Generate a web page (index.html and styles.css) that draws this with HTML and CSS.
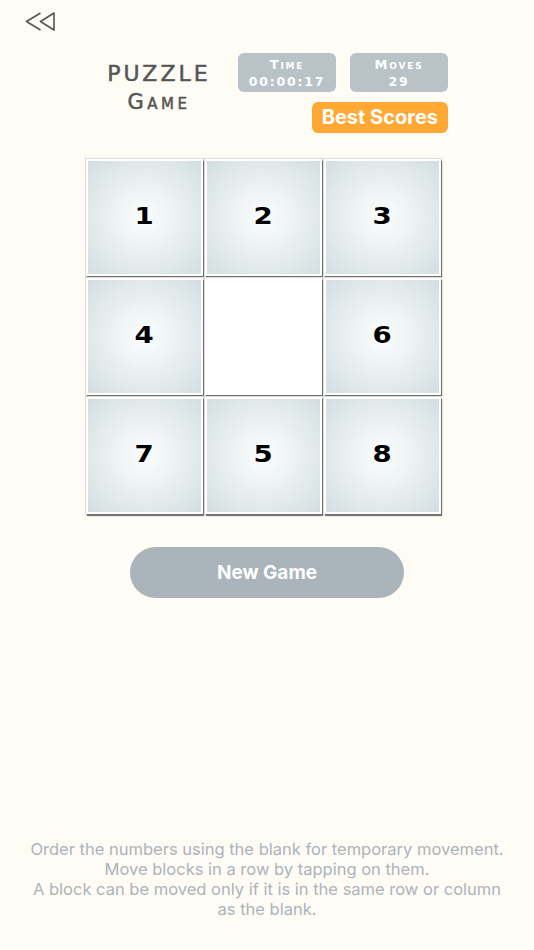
FILE: index.html
```html
<!DOCTYPE html>
<html>
<head>
    <title>Puzzle Game</title>
    <link rel="stylesheet" href="styles.css">
</head>
<body>
    <div class="page">
        <div class="topbar">
            <svg class="back" width="32" height="21" viewBox="0 0 32 21">
                <path d="M15.5 2 L1.5 10.5 L15.5 19 M29 2 L15.5 10.5 L29 19 Z" fill="none" stroke="#555" stroke-width="1.6" stroke-linejoin="round"/>
            </svg>
        </div>

        <div class="header">
            <div class="title">
                <div class="title-top">PUZZLE</div>
                <div class="title-bottom">Game</div>
            </div>
            <div class="stats">
                <div class="stat-row">
                    <div class="stat">
                        <span class="stat-label">Time</span>
                        <span class="stat-value">00:00:17</span>
                    </div>
                    <div class="stat">
                        <span class="stat-label">Moves</span>
                        <span class="stat-value">29</span>
                    </div>
                </div>
                <div class="best">Best Scores</div>
            </div>
        </div>

        <div class="board">
            <div class="tile"><span>1</span></div>
            <div class="tile"><span>2</span></div>
            <div class="tile"><span>3</span></div>
            <div class="tile"><span>4</span></div>
            <div class="tile blank"></div>
            <div class="tile"><span>6</span></div>
            <div class="tile"><span>7</span></div>
            <div class="tile"><span>5</span></div>
            <div class="tile"><span>8</span></div>
        </div>

        <div class="new-game">New Game</div>

        <div class="help">
            Order the numbers using the blank for temporary movement.<br>
            Move blocks in a row by tapping on them.<br>
            A block can be moved only if it is in the same row or column as the blank.
        </div>
    </div>
</body>
</html>
```

FILE: styles.css
```css
body {
    margin: 0;
    background-color: #fffbf5;
    font-family: Inter, "Noto Sans", sans-serif;
}

.page {
    height: 100vh;
    display: flex;
    flex-direction: column;
}

.topbar {
    padding: 11px 0 0 25px;
    height: 21px;
}

.back {
    display: block;
}

.header {
    display: flex;
    margin-top: 21px;
    padding-left: 90px;
}

.title {
    width: 135px;
    text-align: center;
    color: #555;
    font-family: "DejaVu Sans", sans-serif;
    -webkit-text-stroke: 0.5px #555;
    padding-top: 7px;
}

.title-top {
    font-size: 22px;
    letter-spacing: 3px;
    line-height: 28px;
    padding-left: 3px;
}

.title-bottom {
    font-size: 21px;
    font-variant: small-caps;
    letter-spacing: 3.5px;
    line-height: 28px;
    padding-left: 3px;
}

.stats {
    margin-left: 13px;
    width: 210px;
    display: flex;
    flex-direction: column;
    align-items: flex-end;
}

.stat-row {
    display: flex;
    gap: 14px;
}

.stat {
    width: 98px;
    height: 39px;
    border-radius: 6px;
    background-color: #b9c3c7;
    color: #fff;
    display: flex;
    flex-direction: column;
    align-items: center;
    justify-content: center;
    font-family: "DejaVu Sans", sans-serif;
    font-weight: bold;
}

.stat-label {
    font-size: 13px;
    font-variant: small-caps;
    letter-spacing: 1.8px;
    line-height: 18px;
}

.stat-value {
    font-size: 12.5px;
    letter-spacing: 1.8px;
    line-height: 15px;
}

.best {
    margin-top: 10px;
    height: 31px;
    line-height: 31px;
    padding: 0 10px;
    border-radius: 6px;
    background-color: #ffa833;
    color: #fff;
    font-size: 20px;
    font-weight: 700;
}

.board {
    margin: 26px 0 0 86px;
    display: grid;
    grid-template-columns: repeat(3, 117px);
    grid-auto-rows: 117px;
    gap: 2px;
}

.tile {
    box-sizing: border-box;
    border: 2px solid #fff;
    background: radial-gradient(circle, #fbfdfd 0%, #eef3f3 35%, #d3dee0 100%);
    box-shadow: 1px 2px 1px rgba(0, 0, 0, 0.5), 0 0 0 1px #dcdcdc;
    display: flex;
    align-items: center;
    justify-content: center;
    font-family: "DejaVu Sans", sans-serif;
    font-weight: bold;
    font-size: 23px;
    color: #000;
}

.tile span {
    display: inline-block;
    transform: scaleX(1.2);
    margin-top: -3px;
}

.tile.blank {
    background: #fff;
}

.new-game {
    margin: 33px auto 0;
    width: 274px;
    height: 51px;
    line-height: 51px;
    border-radius: 26px;
    background-color: #a9b5ba;
    color: #fff;
    text-align: center;
    font-size: 19px;
    font-weight: 700;
}

.help {
    margin-top: auto;
    padding: 0 24px 31px;
    text-align: center;
    color: #aab5bb;
    font-size: 16.5px;
    line-height: 20px;
}
```
